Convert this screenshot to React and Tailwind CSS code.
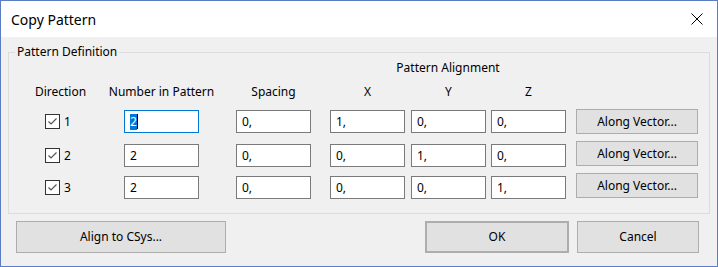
import React from "react";

const rows = [
  { n: "1", vals: ["2", "0,", "1,", "0,", "0,"], top: "mt-[1px]", focused: true },
  { n: "2", vals: ["2", "0,", "0,", "1,", "0,"], top: "mt-[3px]" },
  { n: "3", vals: ["2", "0,", "0,", "0,", "1,"], top: "mt-[3px]" },
];

// left gaps before each of the five text columns
const gaps = ["ml-[27px]", "ml-[37px]", "ml-[19px]", "ml-[6px]", "ml-[5px]"];
const headers = ["Number in Pattern", "Spacing", "X", "Y", "Z"];

const CheckBox = () => (
  <div className="w-[15px] h-[15px] border border-[#333333] bg-white flex items-center justify-center">
    <svg width="13" height="13" viewBox="0 0 13 13">
      <path d="M2.5 6.5 L5 9 L10.5 3.5" fill="none" stroke="#555555" strokeWidth="1.2" />
    </svg>
  </div>
);

const WinButton = ({ children, className = "" }) => (
  <button
    className={`bg-[#e1e1e1] border border-[#adadad] text-[12px] text-black flex items-center justify-center ${className}`}
  >
    {children}
  </button>
);

const Field = ({ value, focused, className = "" }) => (
  <div
    className={`w-[75px] h-[23px] bg-white border flex items-center pl-[5px] text-[12px] leading-[16px] ${
      focused ? "border-[#0078d7]" : "border-[#7a7a7a]"
    } ${className}`}
  >
    {focused ? (
      <>
        <span className="bg-[#0078d7] text-white">{value}</span>
        <span className="w-[1px] h-[15px] bg-black" />
      </>
    ) : (
      <span>{value}</span>
    )}
  </div>
);

export default function App() {
  return (
    <div className="w-[718px] h-[267px] border border-[#5a7dc4] bg-[#f0f0f0] flex flex-col font-['Noto_Sans',sans-serif] text-black">
      {/* Title bar */}
      <div className="h-[36px] bg-white flex items-center justify-between pl-[10px] pr-[14px]">
        <span className="text-[14px]">Copy Pattern</span>
        <svg width="12" height="12" viewBox="0 0 12 12">
          <path d="M0.5 0.5 L11.5 11.5 M11.5 0.5 L0.5 11.5" stroke="#000" strokeWidth="1" />
        </svg>
      </div>

      {/* Group box */}
      <fieldset className="ml-[7px] mt-[7px] w-[702px] border border-[#dcdcdc] p-0 pb-[15px] m-0">
        <legend className="ml-[6px] px-[2px] text-[12px] leading-[16px]">Pattern Definition</legend>

        <div className="h-[16px] flex">
          <div className="ml-[321px] w-[236px] flex justify-center text-[12px] leading-[16px]">
            Pattern Alignment
          </div>
        </div>

        {/* Column headers */}
        <div className="mt-[8px] h-[16px] flex text-[12px] leading-[16px]">
          <div className="ml-[15px] w-[73px] flex justify-center">Direction</div>
          {headers.map((h, i) => (
            <div key={h} className={`${gaps[i]} w-[75px] flex justify-center whitespace-nowrap`}>
              {h}
            </div>
          ))}
        </div>

        {/* Rows */}
        <div className="mt-[9px] flex flex-col gap-[7px]">
          {rows.map((r) => (
            <div key={r.n} className="h-[25px] flex items-start">
              <div className={`ml-[15px] w-[73px] h-[23px] flex items-center pl-[21px] ${r.top}`}>
                <CheckBox />
                <span className="ml-[4px] text-[12px]">{r.n}</span>
              </div>
              {r.vals.map((v, i) => (
                <Field
                  key={i}
                  value={v}
                  focused={r.focused && i === 0}
                  className={`${gaps[i]} ${r.top}`}
                />
              ))}
              <WinButton className="ml-[10px] w-[122px] h-[25px]">Along Vector...</WinButton>
            </div>
          ))}
        </div>
      </fieldset>

      {/* Bottom buttons */}
      <div className="mt-[7px] flex">
        <WinButton className="ml-[15px] w-[210px] h-[32px]">Align to CSys...</WinButton>
        <div className="flex-1" />
        <WinButton className="w-[144px] h-[32px] border-2 border-[#0078d7]">OK</WinButton>
        <WinButton className="ml-[8px] mr-[18px] w-[122px] h-[32px]">Cancel</WinButton>
      </div>
    </div>
  );
}
